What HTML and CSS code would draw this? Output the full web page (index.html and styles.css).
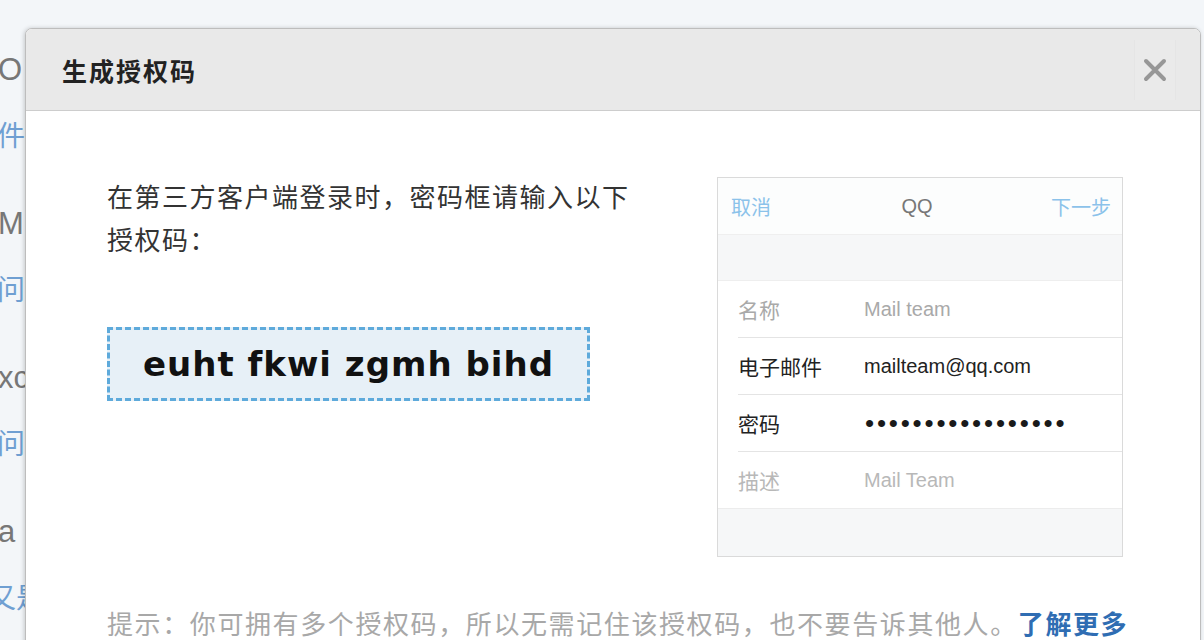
FILE: index.html
```html
<!DOCTYPE html>
<html lang="zh-CN">
<head>
    <meta charset="UTF-8">
    <meta name="viewport" content="width=device-width, initial-scale=1.0">
    <title>生成授权码</title>
    <link rel="stylesheet" href="styles.css">
</head>
<body>
    <!-- 背后的页面 -->
    <div class="page">
        <ul class="faq">
            <li class="q">O</li>
            <li class="a">件?</li>
            <li class="q">M,</li>
            <li class="a">问</li>
            <li class="q">xc</li>
            <li class="a">问</li>
            <li class="q">a</li>
            <li class="a shift">又是</li>
        </ul>
    </div>

    <!-- 弹窗 -->
    <div class="dialog">
        <div class="dialog-head">
            <h2 class="dialog-title">生成授权码</h2>
            <button class="close" aria-label="关闭">
                <svg width="24" height="24" viewBox="0 0 24 24">
                    <path d="M3 3 L21 21 M21 3 L3 21" stroke="#979797" stroke-width="4" stroke-linecap="round" fill="none"/>
                </svg>
            </button>
        </div>

        <div class="dialog-body">
            <div class="auth-row">
                <div class="auth-left">
                    <p class="intro">在第三方客户端登录时，密码框请输入以下授权码：</p>
                    <div class="code">euht fkwi zgmh bihd</div>
                </div>

                <!-- 手机设置示意 -->
                <div class="phone">
                    <div class="phone-nav">
                        <span class="nav-link">取消</span>
                        <span class="nav-title">QQ</span>
                        <span class="nav-link">下一步</span>
                    </div>
                    <div class="phone-gap"></div>
                    <div class="phone-list">
                        <div class="row light"><span class="label">名称</span><span class="value">Mail team</span></div>
                        <div class="row"><span class="label">电子邮件</span><span class="value">mailteam@qq.com</span></div>
                        <div class="row"><span class="label">密码</span><span class="value dots">•••••••••••••••••</span></div>
                        <div class="row lighter"><span class="label">描述</span><span class="value">Mail Team</span></div>
                    </div>
                    <div class="phone-foot"></div>
                </div>
            </div>

            <p class="hint">提示：你可拥有多个授权码，所以无需记住该授权码，也不要告诉其他人。<a class="more" href="#">了解更多</a></p>
        </div>
    </div>
</body>
</html>
```

FILE: styles.css
```css
body {
    margin: 0;
    height: 640px;
    overflow: hidden;
    background: #f3f6f9;
    font-family: "Liberation Sans", "Noto Sans CJK SC", sans-serif;
    color: #333;
}

/* 背后的页面 */
.page {
    padding-top: 50px;
}
.faq {
    list-style: none;
    margin: 0;
    padding: 0;
    font-size: 31px;
    line-height: 40px;
    white-space: nowrap;
}
.faq .q {
    color: #777;
    margin-left: -2px;
    margin-top: 47px;
}
.faq .q:first-child {
    margin-top: 0;
}
.faq .a {
    color: #6f9fd2;
    margin-left: -3px;
    margin-top: 27px;
    font-size: 28px;
}
.faq .shift {
    margin-left: -12px;
}

/* 弹窗 */
.dialog {
    position: absolute;
    left: 25px;
    top: 28px;
    width: 1174px;
    height: 660px;
    background: #fff;
    border: 1px solid #bdbdbd;
    border-radius: 7px;
    box-shadow: -1px 0 4px rgba(0, 0, 0, 0.18);
    overflow: hidden;
}
.dialog-head {
    display: flex;
    align-items: center;
    justify-content: space-between;
    height: 81px;
    padding: 0 24px 0 36px;
    background: #e9e9e9;
    border-bottom: 1px solid #cdcdcd;
}
.dialog-title {
    margin: 0;
    font-size: 25px;
    font-weight: bold;
    letter-spacing: 2px;
    color: #222;
}
.close {
    width: 42px;
    height: 60px;
    padding: 0;
    border: none;
    border-left: 1px solid #e5e5e5;
    border-right: 1px solid #e5e5e5;
    background: #eaeaea;
    display: flex;
    align-items: center;
    justify-content: center;
    cursor: pointer;
}

.dialog-body {
    padding: 66px 77px 0 81px;
}
.auth-row {
    display: flex;
    justify-content: space-between;
    align-items: flex-start;
}
.auth-left {
    width: 535px;
}
.intro {
    margin: 0;
    font-size: 26px;
    line-height: 43px;
    letter-spacing: 1.5px;
    color: #333;
}
.code {
    display: flex;
    align-items: center;
    justify-content: center;
    width: 477px;
    height: 68px;
    margin-top: 64px;
    background: #e7f0f7;
    border: 3px dashed #5eaadb;
    font-family: "DejaVu Sans", sans-serif;
    font-size: 34px;
    font-weight: bold;
    letter-spacing: 1px;
    color: #111;
}

/* 手机设置示意 */
.phone {
    width: 404px;
    border: 1px solid #dadada;
    background: #fff;
    font-size: 20px;
}
.phone-nav {
    display: flex;
    justify-content: space-between;
    align-items: center;
    height: 56px;
    padding: 0 11px 0 13px;
    background: #fcfdfd;
    border-bottom: 1px solid #efefef;
}
.nav-link {
    color: #8bc2ea;
}
.nav-title {
    color: #777;
    margin-left: 12px;
}
.phone-gap {
    height: 45px;
    background: #f6f7f8;
    border-bottom: 1px solid #eeeeee;
}
.row {
    display: flex;
    align-items: center;
    height: 56px;
    margin-left: 20px;
    font-size: 21px;
    color: #222;
}
.row + .row {
    border-top: 1px solid #e4e4e4;
}
.label {
    width: 126px;
    flex-shrink: 0;
}
.row .value {
    font-size: 20px;
}
.row.light {
    color: #a9a9a9;
}
.row.lighter {
    color: #b8b8b8;
}
.row .dots {
    font-size: 26px;
    letter-spacing: 2.8px;
    color: #1a1a1a;
    margin-left: 1px;
}
.phone-foot {
    height: 47px;
    background: #f6f7f8;
    border-top: 1px solid #ececec;
}

.hint {
    margin: 48px 0 0;
    font-size: 26px;
    line-height: 40px;
    letter-spacing: 1.6px;
    color: #a8a8a8;
    white-space: nowrap;
}
.more {
    color: #2f6db3;
    font-weight: bold;
    text-decoration: none;
}
```
